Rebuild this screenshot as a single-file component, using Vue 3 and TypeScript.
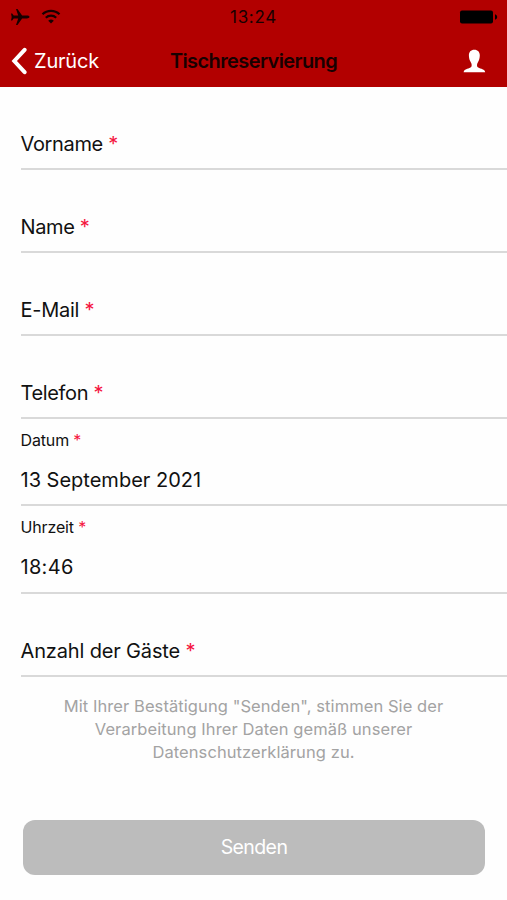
<script setup lang="ts">
interface Field {
  id: string
  label: string
  value?: string
  height: number
  track: string
}

const fields: Field[] = [
  { id: 'firstname', label: 'Vorname', height: 83, track: '-0.35px' },
  { id: 'name', label: 'Name', height: 83, track: '-0.35px' },
  { id: 'email', label: 'E-Mail', height: 83, track: '-0.25px' },
  { id: 'phone', label: 'Telefon', height: 83, track: '-0.35px' },
  { id: 'date', label: 'Datum', value: '13 September 2021', height: 87, track: '0px' },
  { id: 'time', label: 'Uhrzeit', value: '18:46', height: 88, track: '0.3px' },
  { id: 'guests', label: 'Anzahl der Gäste', height: 83, track: '-0.15px' },
]
</script>

<template>
  <div class="screen">
    <header class="header">
      <div class="status">
        <div class="signals">
          <svg class="plane" width="20" height="18" viewBox="0 0 20 18">
            <path d="M19.500 9c0-.9-1.300-1.400-2.600-1.400h-4.800L7.500 1H6l2.200 6.600H3.700L2.200 5.600H1L1.700 9 1 12.400h1.200l1.500-2h4.500L6 17h1.500l4.600-6.600h4.800c1.300 0 2.600-.5 2.600-1.400z" />
          </svg>
          <svg class="wifi" width="20" height="15" viewBox="0 0 20 15">
            <path d="M1.500 5.300a12.200 12.200 0 0 1 17 0M4.800 8.700a7.500 7.500 0 0 1 10.400 0" fill="none" stroke="currentColor" stroke-width="2.200" />
            <path d="M10 14.600 7.200 11.800a4 4 0 0 1 5.600 0z" />
          </svg>
        </div>
        <span class="clock">13:24</span>
        <svg class="battery" width="40" height="14" viewBox="0 0 40 14">
          <rect x="1" y="0.500" width="33" height="13" rx="2" />
          <path d="M36 4.200c1.300.5 2.200 1.500 2.200 2.800S37.300 9.300 36 9.800z" />
        </svg>
      </div>
      <nav class="nav">
        <button class="back" type="button">
          <svg width="16" height="28" viewBox="0 0 16 28">
            <path d="M13.600 2.800 3.300 14l10.300 11.200" fill="none" stroke="currentColor" stroke-width="4" stroke-linecap="round" stroke-linejoin="miter" />
          </svg>
          <span>Zurück</span>
        </button>
        <h1 class="title">Tischreservierung</h1>
        <button class="profile" type="button" aria-label="Profil">
          <svg width="23" height="24" viewBox="0 0 23 24">
            <path d="M11.300.8c-3.500 0-5.500 2.400-5.400 5.700.1 2.200.4 3.700 1 5.100.4 1 1.100 1.900 1.500 2.900.4 1.200.4 2.600-.2 3.400-.8.800-2.400 1.300-4 1.900C2.100 20.600.9 21.500.6 23.200h21.600c-.3-1.700-1.600-2.600-3.700-3.400-1.600-.6-3.200-1.100-4-1.900-.6-.8-.6-2.200-.2-3.400.4-1 1.100-1.900 1.500-2.900.6-1.400.9-2.900 1-5.100.1-3.300-2-5.700-5.500-5.700z" />
          </svg>
        </button>
      </nav>
    </header>
    <main class="form">
      <div
        v-for="field in fields"
        :key="field.id"
        class="field"
        :class="{ filled: field.value }"
        :style="{ height: field.height + 'px' }"
      >
        <div class="label" :style="field.value ? {} : { letterSpacing: field.track }">
          {{ field.label }} <span class="required">*</span>
        </div>
        <div v-if="field.value" class="value" :style="{ letterSpacing: field.track }">{{ field.value }}</div>
      </div>
      <p class="notice">
        Mit Ihrer Bestätigung "Senden", stimmen Sie der<br />
        Verarbeitung Ihrer Daten gemäß unserer<br />
        Datenschutzerklärung zu.
      </p>
      <button class="send" type="button">Senden</button>
    </main>
  </div>
</template>

<style>
body {
  margin: 0;
  background: #fefefe;
}
</style>

<style scoped>
.screen {
  width: 507px;
  height: 900px;
  overflow: hidden;
  background: #fefefe;
  color: #111;
  font-family: Inter, "Liberation Sans", sans-serif;
}
button {
  padding: 0;
  border: 0;
  background: none;
  color: inherit;
  font: inherit;
}
svg {
  display: block;
  fill: currentColor;
}
.header {
  box-sizing: border-box;
  height: 87px;
  background: #b20000;
  color: #180000;
}
.status {
  display: grid;
  grid-template-columns: 1fr auto 1fr;
  align-items: center;
  height: 34px;
  padding: 0 8px 0 10px;
}
.signals {
  display: flex;
  align-items: center;
  gap: 11px;
}
.wifi {
  margin-top: -1px;
}
.clock {
  margin-right: 2px;
  font-size: 17px;
  line-height: 34px;
  letter-spacing: 0.7px;
}
.battery {
  justify-self: end;
  color: #000;
}
.nav {
  display: grid;
  grid-template-columns: 1fr auto 1fr;
  align-items: center;
  height: 53px;
  padding: 0 21px;
}
.back {
  display: flex;
  align-items: center;
  gap: 7px;
  margin-left: -10px;
  color: #fff;
  font-size: 20px;
  line-height: 28px;
  letter-spacing: -0.2px;
}
.title {
  margin: 0;
  font-size: 20px;
  line-height: 28px;
  font-weight: 600;
  letter-spacing: -0.6px;
}
.profile {
  justify-self: end;
  color: #fff;
}
.field {
  box-sizing: border-box;
  margin-left: 21px;
  padding-top: 43px;
  border-bottom: 2px solid #d9d9d9;
  font-size: 20px;
  line-height: 28px;
  white-space: nowrap;
}
.field.filled {
  padding-top: 10px;
}
.filled .label {
  font-size: 16px;
  line-height: 22px;
  letter-spacing: -0.15px;
}
.filled .value {
  margin-top: 15px;
}
.label,
.value {
  margin-left: -0.5px;
}
.required {
  color: #f5163f;
}
.notice {
  margin: 18px 0 0;
  color: #a3a3a3;
  font-size: 16.500px;
  line-height: 23.200px;
  letter-spacing: 0.08px;
  text-align: center;
}
.send {
  display: block;
  width: 462px;
  height: 55px;
  margin: 55px 0 0 23px;
  border-radius: 12px;
  background: #bcbcbc;
  color: #fff;
  font-size: 19.500px;
  letter-spacing: -0.6px;
}
</style>
